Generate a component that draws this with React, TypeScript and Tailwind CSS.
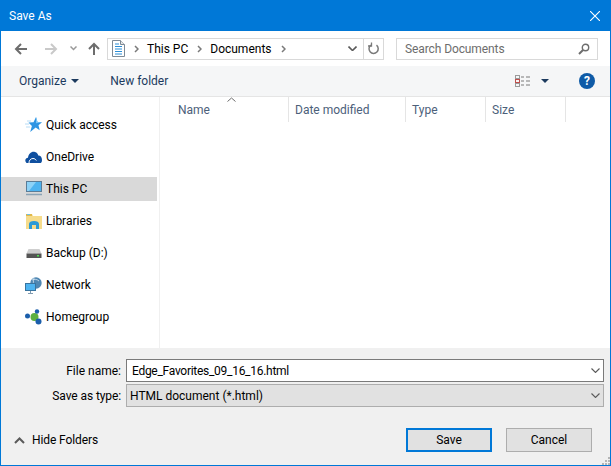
const font = { fontFamily: 'Roboto, "Noto Sans", sans-serif' }

function StarIcon() {
  return (
    <svg width="17" height="16" viewBox="0 0 17 16">
      <path d="M11 0l1.500 5 4.500.3-3.500 3 1.200 5-4-2.700-5.500 4.400 1.700-6L3.500 5.500l5-.3z" fill="#2f95e3" />
      <path d="M11 0l1.500 5 4.500.3-6 1z" fill="#7cc4f5" />
      <path d="M2 4h4M0 7h4M1 10h4" stroke="#b8dcf5" strokeWidth="1" />
    </svg>
  )
}

function CloudIcon() {
  return (
    <svg width="17" height="14" viewBox="0 0 17 14">
      <path d="M1.500 13C-.5 11.500 0 8 3 7.700 3.500 4 6.500 1 10 2c2 .5 3 2 3.300 3.500 2.500 0 3.700 2 3.700 4.500 0 1.500-.5 2.500-1.200 3z" fill="#0f4f9f" />
      <path d="M4 13c0-2.500 1.500-4.500 4-4.500 1.500 0 2.700.8 3.300 2" fill="none" stroke="#fff" strokeWidth="1" />
    </svg>
  )
}

function MonitorIcon() {
  return (
    <svg width="16" height="16" viewBox="0 0 16 16">
      <rect x="0.500" y="0.500" width="15" height="10" fill="#4db3f0" stroke="#5a7c97" />
      <path d="M1 1h9L3 10H1z" fill="#8dd2f7" />
      <path d="M0 13.500h16" stroke="#8aa3b5" strokeWidth="1.500" />
    </svg>
  )
}

function LibraryIcon() {
  return (
    <svg width="16" height="16" viewBox="0 0 16 16">
      <path d="M0 1h6l1 2h9v13H0z" fill="#f6dc8c" />
      <path d="M0 1h6v2H0z" fill="#e0b94c" />
      <path d="M1 1.500h3" stroke="#6cc0e8" />
      <path d="M3 16v-5c0-2 2-3 5-3s5 1 5 3v5h-3v-4H6v4z" fill="#2b9ad6" />
    </svg>
  )
}

function DriveIcon() {
  return (
    <svg width="16" height="16" viewBox="0 0 16 16">
      <path d="M2.500 4h11l2 4.500H.5z" fill="#cfcfcf" />
      <rect x="0.500" y="8.500" width="15" height="4.500" fill="#555555" />
      <rect x="11" y="10" width="2" height="1.500" fill="#4fe04f" />
    </svg>
  )
}

function NetworkIcon() {
  return (
    <svg width="17" height="17" viewBox="0 0 17 17">
      <circle cx="11" cy="6" r="5.700" fill="#4f87b3" />
      <path d="M7 3c2-1 5-1 7 1M9 1c-1 3-1 6 1 10" fill="none" stroke="#d6e6f2" strokeWidth="0.800" />
      <rect x="0.500" y="6.500" width="10" height="7" fill="#4db3f0" stroke="#39749f" />
      <path d="M5.500 14v2M3 16.500h5" stroke="#7f9bb0" />
    </svg>
  )
}

function HomegroupIcon() {
  return (
    <svg width="17" height="16" viewBox="0 0 17 16">
      <circle cx="2.500" cy="7" r="2.500" fill="#1b5eab" />
      <circle cx="9.500" cy="8" r="4" fill="#5cb040" />
      <circle cx="12" cy="2.500" r="2.200" fill="#1b5eab" />
      <circle cx="13.500" cy="12.500" r="3" fill="#1b5eab" />
    </svg>
  )
}

function DocIcon() {
  return (
    <svg width="13" height="17" viewBox="0 0 13 17">
      <path d="M.5.500h8l4 4v12H.5z" fill="#fff" stroke="#7d8a96" />
      <path d="M8.500.500v4h4" fill="#e6e6e6" stroke="#7d8a96" />
      <path d="M3 4h4M3 6.500h7M3 9h7M3 11.500h7M3 14h7" stroke="#2b8ed6" />
    </svg>
  )
}

function ArrowIcon({ dir, color }: { dir: 'left' | 'right' | 'up'; color: string }) {
  const d =
    dir === 'left'
      ? 'M7 2L2 7l5 5M2 7h11'
      : dir === 'right'
        ? 'M7 2l5 5-5 5M12 7H1'
        : 'M2 7l5-5 5 5M7 2v11'
  return (
    <svg width="14" height="14" viewBox="0 0 14 14" fill="none" stroke={color} strokeWidth="2">
      <path d={d} />
    </svg>
  )
}

function Crumb() {
  return (
    <svg width="5" height="8" viewBox="0 0 5 8" fill="none" stroke="#7a7a7a" strokeWidth="1.500">
      <path d="M1 1l3 3-3 3" />
    </svg>
  )
}

function Caret() {
  return (
    <svg width="8" height="4" viewBox="0 0 8 4">
      <path d="M0 0h8L4 4z" fill="#1c3a5e" />
    </svg>
  )
}

function Chevron({ w, color, sw }: { w: number; color: string; sw: number }) {
  return (
    <svg width={w} height={w / 2 + 1} viewBox={`0 0 ${w} ${w / 2 + 1}`} fill="none" stroke={color} strokeWidth={sw}>
      <path d={`M.5 .5L${w / 2} ${w / 2}L${w - 0.5} .5`} />
    </svg>
  )
}

function NavRow({ icon, label, active }: { icon: React.ReactNode; label: string; active?: boolean }) {
  return (
    <div className={`flex h-6 items-center mb-2 ${active ? 'bg-[#d9d9d9]' : ''}`}>
      <div className="flex w-[41px] justify-end">{icon}</div>
      <span className="ml-[4px] text-[12px] text-black">{label}</span>
    </div>
  )
}

const columns = [
  { label: 'Name', width: 'w-[129px]', pad: 'pl-[18px]' },
  { label: 'Date modified', width: 'w-[117px]', pad: 'pl-[6px]' },
  { label: 'Type', width: 'w-[80px]', pad: 'pl-[6px]' },
  { label: 'Size', width: 'w-[80px]', pad: 'pl-[6px]' },
]

export default function App() {
  return (
    <div style={font} className="flex h-[466px] w-[611px] flex-col overflow-hidden border border-t-0 border-[#0078d7] bg-white">
      {/* Title bar */}
      <div className="flex h-[31px] shrink-0 items-center justify-between bg-[#0078d7] pl-[8px] pr-[10px] text-white">
        <span className="text-[12px]">Save As</span>
        <svg width="10" height="10" viewBox="0 0 10 10" stroke="#fff" strokeWidth="1.100">
          <path d="M0 0l10 10M10 0L0 10" />
        </svg>
      </div>

      {/* Address row */}
      <div className="flex h-[35px] shrink-0 items-center pl-[13px] pr-[12px]">
        <ArrowIcon dir="left" color="#6d6d6d" />
        <div className="ml-[16px]">
          <ArrowIcon dir="right" color="#c9c9c9" />
        </div>
        <div className="ml-[12px]">
          <Chevron w={7} color="#9a9a9a" sw={1.5} />
        </div>
        <div className="ml-[10px]">
          <ArrowIcon dir="up" color="#6d6d6d" />
        </div>
        <div className="ml-[6px] flex h-[22px] w-[277px] items-center border border-[#d9d9d9] pl-[4px]">
          <DocIcon />
          <div className="ml-[9px]"><Crumb /></div>
          <span className="ml-[8px] text-[12px] text-black">This PC</span>
          <div className="ml-[9px]"><Crumb /></div>
          <span className="ml-[8px] text-[12px] text-black">Documents</span>
          <div className="ml-[9px]"><Crumb /></div>
          <div className="ml-auto mr-[6px]">
            <Chevron w={9} color="#5a5a5a" sw={1.6} />
          </div>
          <div className="flex h-full w-[20px] items-center justify-center border-l border-[#d9d9d9]">
            <svg width="12" height="13" viewBox="0 0 12 13" fill="none" stroke="#7a7a7a" strokeWidth="1.500">
              <path d="M8.500 3.200A4.600 4.600 0 1 1 3 3" />
              <path d="M3.500 .5v3.500H0" strokeWidth="1.300" />
            </svg>
          </div>
        </div>
        <div className="ml-auto flex h-[22px] w-[202px] items-center justify-between border border-[#d9d9d9] pl-[8px] pr-[7px]">
          <span className="text-[12px] tracking-[-0.1px] text-[#6d6d6d]">Search Documents</span>
          <svg width="12" height="12" viewBox="0 0 12 12" fill="none" stroke="#6d6d6d">
            <circle cx="7.500" cy="4.500" r="3.200" strokeWidth="1.400" />
            <path d="M5 7L1 11" strokeWidth="2" />
          </svg>
        </div>
      </div>

      {/* Command bar */}
      <div className="flex h-[31px] shrink-0 items-center border-b border-[#e5e5e5] bg-[#f5f6f7] pl-[18px] pr-[15px] text-[#1c3a5e]">
        <span className="text-[12px]">Organize</span>
        <div className="ml-[5px]"><Caret /></div>
        <span className="ml-[31px] text-[12px]">New folder</span>
        <svg className="ml-auto" width="16" height="13" viewBox="0 0 16 13" fill="none">
          <rect x="0.500" y="0.500" width="4" height="3" stroke="#9a9a9a" />
          <rect x="0.500" y="4.500" width="4" height="3" stroke="#c0504d" />
          <rect x="0.500" y="8.500" width="4" height="3" stroke="#9a9a9a" />
          <path d="M6 2h3M11 2h4M6 6h3M11 6h4M6 10h3M11 10h4" stroke="#7a7a7a" />
        </svg>
        <div className="ml-[10px]"><Caret /></div>
        <div className="ml-[30px] flex h-4 w-4 items-center justify-center rounded-full bg-[#0f5ba7] text-[12px] font-bold text-white">?</div>
      </div>

      {/* Nav pane and file list */}
      <div className="flex min-h-0 flex-1">
        <div className="w-[159px] shrink-0 border-r border-[#f0f0f0] pt-[16px]">
          <div className="mr-[2px]">
            <NavRow icon={<StarIcon />} label="Quick access" />
            <NavRow icon={<CloudIcon />} label="OneDrive" />
            <NavRow icon={<MonitorIcon />} label="This PC" active />
            <NavRow icon={<LibraryIcon />} label="Libraries" />
            <NavRow icon={<DriveIcon />} label="Backup (D:)" />
            <NavRow icon={<NetworkIcon />} label="Network" />
            <NavRow icon={<HomegroupIcon />} label="Homegroup" />
          </div>
        </div>
        <div className="relative flex h-[25px] flex-1">
          <svg className="absolute left-[67px] top-0" width="9" height="5" viewBox="0 0 9 5" fill="none" stroke="#6d6d6d">
            <path d="M.5 4.500l4-3.500 4 3.500" />
          </svg>
          {columns.map((c) => (
            <div key={c.label} className={`${c.width} ${c.pad} flex items-center border-r border-[#e5e5e5] text-[12px] text-[#4c607a]`}>
              {c.label}
            </div>
          ))}
        </div>
      </div>

      {/* Footer */}
      <div className="relative h-[117px] shrink-0 bg-[#f0f0f0] pt-[11px]">
        <div className="flex items-center pr-[6px]">
          <label className="w-[120px] text-right text-[12px] text-black">File name:</label>
          <div className="ml-[5px] flex h-[23px] flex-1 items-center justify-between border border-[#7a7a7a] bg-white pl-[5px] pr-[3px] text-[12px] text-black">
            <span className="tracking-[-0.28px]">Edge_Favorites_09_16_16.html</span>
            <Chevron w={9} color="#5a5a5a" sw={1.1} />
          </div>
        </div>
        <div className="mt-[2px] flex items-center pr-[6px]">
          <label className="w-[120px] text-right text-[12px] tracking-[-0.1px] text-black">Save as type:</label>
          <div className="ml-[5px] flex h-[23px] flex-1 items-center justify-between border border-[#adadad] bg-[#e1e1e1] pl-[3px] pr-[3px] text-[12px] text-black">
            <span>HTML document (*.html)</span>
            <Chevron w={9} color="#5a5a5a" sw={1.1} />
          </div>
        </div>
        <div className="mt-[21px] flex items-center pr-[18px]">
          <svg className="ml-[13px]" width="11" height="7" viewBox="0 0 11 7" fill="none" stroke="#5a5a5a" strokeWidth="2">
            <path d="M1 6l4.500-4.500L10 6" />
          </svg>
          <span className="ml-[7px] text-[12px] tracking-[-0.1px] text-black">Hide Folders</span>
          <button className="ml-auto h-6 w-[86px] border-2 border-[#0078d7] bg-[#e1e1e1] text-[12px] text-black">Save</button>
          <button className="ml-[14px] h-6 w-[86px] border border-[#adadad] bg-[#e1e1e1] text-[12px] text-black">Cancel</button>
        </div>
        <svg className="absolute bottom-0 right-0" width="8" height="8" viewBox="0 0 8 8" fill="#b5b5b5">
          <path d="M6 0h2v2H6zM3 3h2v2H3zM6 3h2v2H6zM0 6h2v2H0zM3 6h2v2H3zM6 6h2v2H6z" />
        </svg>
      </div>
    </div>
  )
}
